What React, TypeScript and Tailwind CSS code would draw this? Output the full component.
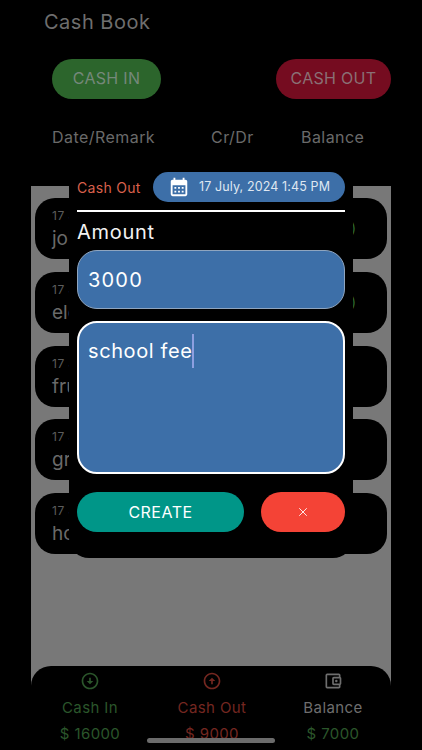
import React from 'react';
import { MdCalendarMonth, MdOutlineArrowCircleDown, MdOutlineArrowCircleUp, MdOutlineAccountBalanceWallet } from 'react-icons/md';
import { X } from 'lucide-react';

const rows = [
  { date: '17 July, 2024', remark: 'john', amount: '(+ 10000)', color: 'text-[#2f6b2f]' },
  { date: '17 July, 2024', remark: 'electric', amount: '(+ 6000)', color: 'text-[#2f6b2f]' },
  { date: '17 July, 2024', remark: 'fruits', amount: '', color: '' },
  { date: '17 July, 2024', remark: 'grocery', amount: '', color: '' },
  { date: '17 July, 2024', remark: 'house', amount: '', color: '' },
];

const EntryModal = () => (
  <div className="absolute left-[69px] top-[165px] flex h-[393px] w-[284px] flex-col rounded-[20px] bg-black px-2 pt-[7px]">
    <div className="flex h-[30px] items-center justify-between">
      <span className="text-[14px] tracking-[0.3px] text-[#d9604c]">Cash Out</span>
      <div className="flex h-[30px] w-[192px] items-center rounded-full bg-[#3d6fa8] pl-[15px] text-[12.5px] tracking-[0.12px] text-[#dfe7f1]">
        <MdCalendarMonth className="mr-[9px] text-white" size={22} />
        <span>17 July, 2024 1:45 PM</span>
      </div>
    </div>
    <div className="mt-[8px] h-[2px] bg-white" />
    <div className="mt-[7px] text-[20px] leading-[26px] tracking-[0.7px] text-[#f2f2f2]">Amount</div>
    <div className="mt-[5px] flex h-[59px] items-center rounded-[20px] border border-[#8fa5bf] bg-[#3d6fa8] pl-[10px] text-[20px] tracking-[1.2px] text-white">
      3000
    </div>
    <div className="mt-[12px] h-[153px] rounded-[20px] border-2 border-white bg-[#3d6fa8] pl-[9px] pt-[11px] text-[20px] tracking-[0.6px] text-white">
      <div className="flex h-[34px] items-center">
        <span>school fee</span>
        <span className="h-[34px] w-[1.5px] bg-[#8d9fe0]" />
      </div>
    </div>
    <div className="mt-[18px] flex justify-between">
      <div className="flex h-[40px] w-[167px] items-center justify-center rounded-full bg-[#009688] text-[16px] tracking-[0.5px] text-white">
        CREATE
      </div>
      <div className="flex h-[40px] w-[84px] items-center justify-center rounded-full bg-[#f44336] text-white">
        <X size={14} strokeWidth={1.5} />
      </div>
    </div>
  </div>
);

export default function App() {
  return (
    <div className="relative flex h-[750px] w-[422px] flex-col overflow-hidden bg-black font-['Inter',sans-serif]">
      <div className="pl-[44px] pt-[9px] text-[20px] leading-[26px] tracking-[0.5px] text-[#6e6e6e]">Cash Book</div>

      <div className="mt-[24px] flex justify-between pl-[52px] pr-[31px]">
        <div className="flex h-[40px] w-[109px] items-center justify-center rounded-full bg-[#2c652c] pb-[2px] text-[16px] tracking-[0.3px] text-[#75887a]">
          CASH IN
        </div>
        <div className="flex h-[40px] w-[115px] items-center justify-center rounded-full bg-[#750c20] pb-[2px] text-[16px] tracking-[0.3px] text-[#8a7075]">
          CASH OUT
        </div>
      </div>

      <div className="mt-[27px] flex text-[16px] leading-[22px] tracking-[0.45px] text-[#6a6a6a]">
        <span className="ml-[52px] w-[159px]">Date/Remark</span>
        <span className="w-[90px]">Cr/Dr</span>
        <span>Balance</span>
      </div>

      <div className="mx-[31px] mt-[38px] flex flex-1 flex-col bg-[#787878]">
        <div className="flex flex-1 flex-col gap-[12.75px] px-[4px] pt-[12px]">
          {rows.map((row) => (
            <div key={row.remark} className="flex h-[61px] items-center justify-between rounded-[20px] bg-black pl-[17px] pr-[31px]">
              <div className="flex flex-col pt-[3px]">
                <span className="text-[12px] leading-[14px] tracking-[0.5px] text-[#5c5c5c]">{row.date}</span>
                <span className="mt-[4px] text-[19px] leading-[24px] text-[#6a6a6a]">{row.remark}</span>
              </div>
              <span className={`text-[14px] ${row.color}`}>{row.amount}</span>
            </div>
          ))}
        </div>

        <div className="flex h-[84px] rounded-t-[20px] bg-black pt-[5px] text-[15px] tracking-[0.4px]">
          <div className="flex w-[118px] flex-col items-center text-[#2b562b]">
            <MdOutlineArrowCircleDown size={20} />
            <span className="mt-[7px] leading-[20px]">Cash In</span>
            <span className="mt-[6px] leading-[20px]">$ 16000</span>
          </div>
          <div className="flex w-[126px] flex-col items-center text-[#742720]">
            <MdOutlineArrowCircleUp size={20} />
            <span className="mt-[7px] leading-[20px]">Cash Out</span>
            <span className="mt-[6px] leading-[20px]">$ 9000</span>
          </div>
          <div className="flex w-[116px] flex-col items-center">
            <MdOutlineAccountBalanceWallet className="text-[#6e6e6e]" size={20} />
            <span className="mt-[7px] leading-[20px] text-[#6e6e6e]">Balance</span>
            <span className="mt-[6px] leading-[20px] text-[#2b562b]">$ 7000</span>
          </div>
        </div>
      </div>

      <EntryModal />
      <div className="absolute bottom-[7px] left-[147px] h-[5px] w-[128px] rounded-full bg-[#6b6b6b]" />
    </div>
  );
}
